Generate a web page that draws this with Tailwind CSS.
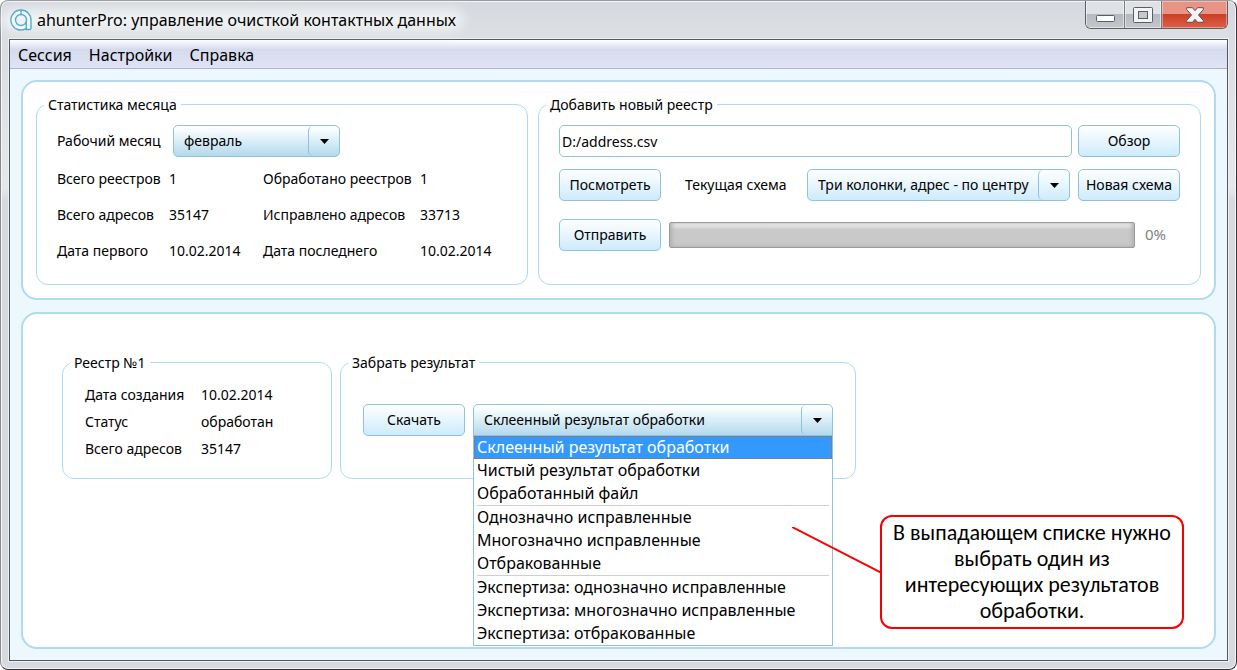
<!DOCTYPE html>
<html lang="ru">
<head>
  <meta charset="UTF-8" />
  <meta name="viewport" content="width=device-width, initial-scale=1.0" />
  <title>ahunterPro: управление очисткой контактных данных</title>
  <script src="https://cdn.jsdelivr.net/npm/@tailwindcss/browser@4"></script>
</head>
<body class="bg-white font-['Noto_Sans',sans-serif] text-black">
  <div class="flex min-h-screen flex-col rounded-lg border border-t-[#9a9a9e] border-r-[#333] border-b-[#333] border-l-[#8a8a8e] bg-linear-to-b from-[#d6dae0] from-0% via-[#e6e9eb] via-28% to-[#d6dae0] to-30% px-2 pb-2 shadow-[inset_0_0_0_1px_#f4f6f8]">

    <!-- Заголовок окна -->
    <header class="flex h-[38px] items-start justify-between bg-linear-to-b from-[#d5d9df] to-[#dcdfe3] shadow-[inset_0_1px_0_#f4f6f8]">
      <div class="relative flex h-[38px] items-center gap-1">
        <div class="absolute -inset-x-2 inset-y-2 rounded-full bg-[#eff1f2] blur-[6px]"></div>
        <svg class="relative h-6 w-6" viewBox="0 0 24 24" fill="none">
          <path d="M12 2a10 10 0 1 0 5 18.600V21.500h3.500q1.500 0 1.500-1.500V12A10 10 0 0 0 12 2z" fill="#f2fafd" stroke="#58a9d0" stroke-width="1.400" />
          <circle cx="12" cy="12" r="5.500" fill="#edf3f6" stroke="#58a9d0" stroke-width="1.400" />
          <path d="M12 2v5M17.300 13v8" stroke="#58a9d0" stroke-width="1.400" />
        </svg>
        <h1 class="relative text-base">ahunterPro: управление очисткой контактных данных</h1>
      </div>
      <div class="flex h-7 overflow-hidden rounded-b-md border border-t-0 border-[#5c6066]">
        <button type="button" aria-label="Свернуть" class="flex w-[39px] items-center justify-center border-r border-[#777b82] bg-linear-to-b from-[#dfe2e5] from-50% via-[#b6bac0] via-50% to-[#c4c7cc] shadow-[inset_0_0_0_1px_#ffffff80]">
          <svg class="mt-2 h-[7px] w-[19px]" viewBox="0 0 19 7"><rect x=".5" y=".5" width="18" height="6" rx="1" fill="#fff" stroke="#5a5d66" /></svg>
        </button>
        <button type="button" aria-label="Развернуть" class="flex w-[37px] items-center justify-center border-r border-[#777b82] bg-linear-to-b from-[#dfe2e5] from-50% via-[#b6bac0] via-50% to-[#c4c7cc] shadow-[inset_0_0_0_1px_#ffffff80]">
          <svg class="h-4 w-5" viewBox="0 0 20 16"><rect x=".5" y=".5" width="19" height="15" rx="1" fill="#f4f4f5" stroke="#5a5d66" /><rect x="5.500" y="4.500" width="9" height="7" fill="#c6c9ce" stroke="#5a5d66" /></svg>
        </button>
        <button type="button" aria-label="Закрыть" class="flex w-[65px] items-center justify-center bg-linear-to-b from-[#e89384] from-48% via-[#cb3f27] via-50% to-[#dc6049] shadow-[inset_0_0_0_1px_#ffffff60]">
          <svg class="h-4 w-[18px]" viewBox="0 0 18 16"><path d="M.7.7h5.800L9 3.700 11.500.7h5.800v1.800L12.500 8l4.800 5.500v1.800h-5.800L9 12.300l-2.500 3H.7v-1.800L5.500 8 .7 2.500z" fill="#f4f4f4" stroke="#5a5058" stroke-linejoin="round" /></svg>
        </button>
      </div>
    </header>

    <div class="flex flex-1 flex-col border border-[#55585e] bg-[#ecf7fe] shadow-[0_0_0_1px_#eef0f2]">
      <nav class="flex h-[29px] items-center gap-[17px] border-b border-[#b0b4d0] bg-linear-to-b from-white from-0% via-[#d5daed] via-34% to-[#dfe3f5] px-2 pt-px text-base">
        <a href="#">Сессия</a>
        <a href="#">Настройки</a>
        <a href="#">Справка</a>
      </nav>

      <main class="flex flex-1 flex-col gap-3 px-[11px] pt-[11px] pb-[11px] text-sm">
        <section class="flex gap-[10px] rounded-2xl border-2 border-[#b0daee] bg-white px-[13px] pt-3 pb-[13px]">
          <fieldset class="w-[492px] rounded-xl border border-[#b0daee] px-5 pb-[15px]">
            <legend class="-ml-[13px] px-1 leading-[21px]">Статистика месяца</legend>
            <div class="mt-[10px] mb-1 flex items-center">
              <label for="month" class="w-[116px]">Рабочий месяц</label>
              <div class="relative w-[167px]">
                <select id="month" class="h-8 w-full appearance-none rounded-[5px] border border-[#8fc3da] bg-linear-to-b from-white from-5% via-[#def0f9] via-45% to-[#b3d9ec] px-[10px]">
                  <option>февраль</option>
                </select>
                <span class="pointer-events-none absolute inset-y-px right-px flex w-[31px] items-center justify-center rounded-l-[5px] border-l border-[#8fc3da]">
                  <svg class="h-[5px] w-[9px]" viewBox="0 0 9 5"><path d="M0 0h9L4.500 5z" /></svg>
                </span>
              </div>
            </div>
            <dl class="grid auto-rows-[36px] grid-cols-[112px_94px_157px_1fr] items-center whitespace-nowrap">
              <dt>Всего реестров</dt><dd>1</dd>
              <dt>Обработано реестров</dt><dd>1</dd>
              <dt>Всего адресов</dt><dd>35147</dd>
              <dt>Исправлено адресов</dt><dd>33713</dd>
              <dt>Дата первого</dt><dd>10.02.2014</dd>
              <dt>Дата последнего</dt><dd>10.02.2014</dd>
            </dl>
          </fieldset>

          <fieldset class="min-w-0 flex-1 rounded-xl border border-[#b0daee] px-5">
            <legend class="-ml-[13px] px-1 leading-[21px]"><label for="path">Добавить новый реестр</label></legend>
            <div class="mt-[10px] flex gap-[6px]">
              <input id="path" type="text" value="D:/address.csv" class="h-8 min-w-0 flex-1 rounded-[5px] border border-[#8fc3da] bg-white px-[2px]" />
              <button type="button" class="h-8 w-[102px] rounded-[5px] border border-[#8fc3da] bg-linear-to-b from-white to-[#cdebfc]">Обзор</button>
            </div>
            <div class="mt-3 flex items-center">
              <button type="button" class="h-8 w-[102px] rounded-[5px] border border-[#8fc3da] bg-linear-to-b from-white to-[#cdebfc]">Посмотреть</button>
              <label for="scheme" class="ml-6 flex-1 whitespace-nowrap">Текущая схема</label>
              <div class="relative mr-2 w-[263px]">
                <select id="scheme" class="h-8 w-full appearance-none rounded-[5px] border border-[#8fc3da] bg-linear-to-b from-white to-[#cdebfc] pl-[10px]">
                  <option>Три колонки, адрес - по центру</option>
                </select>
                <span class="pointer-events-none absolute inset-y-px right-px flex w-[31px] items-center justify-center rounded-l-[5px] border-l border-[#8fc3da]">
                  <svg class="h-[5px] w-[9px]" viewBox="0 0 9 5"><path d="M0 0h9L4.500 5z" /></svg>
                </span>
              </div>
              <button type="button" class="h-8 w-[102px] rounded-[5px] border border-[#8fc3da] bg-linear-to-b from-white to-[#cdebfc] whitespace-nowrap">Новая схема</button>
            </div>
            <div class="mt-[18px] flex items-center">
              <button type="button" class="h-8 w-[102px] rounded-[5px] border border-[#8fc3da] bg-linear-to-b from-white to-[#cdebfc]">Отправить</button>
              <div role="progressbar" aria-valuenow="0" aria-valuemin="0" aria-valuemax="100" aria-label="Отправка" class="ml-2 h-[26px] flex-1 rounded-xs border border-[#9a9a9a] bg-linear-to-b from-[#f0f0f0] from-5% via-[#c9c9c9] via-28% to-[#c9c9c9] shadow-[inset_3px_0_4px_-1px_#b0b0b0,inset_-3px_0_4px_-1px_#b0b0b0]"></div>
              <span class="ml-[10px] w-[35px] text-[15px] text-[#808080]">0%</span>
            </div>
          </fieldset>
        </section>

        <section class="relative flex flex-1 items-start gap-2 rounded-2xl border-2 border-[#b0daee] bg-white px-[39px] pt-[38px]">
          <fieldset class="h-[127px] w-[270px] rounded-xl border border-[#b0daee] px-[22px]">
            <legend class="-ml-[15px] px-1 leading-[21px]">Реестр №1</legend>
            <dl class="mt-2 grid auto-rows-[27px] grid-cols-[116px_1fr] items-center">
              <dt>Дата создания</dt><dd>10.02.2014</dd>
              <dt>Статус</dt><dd>обработан</dd>
              <dt>Всего адресов</dt><dd>35147</dd>
            </dl>
          </fieldset>

          <fieldset class="h-[127px] w-[516px] rounded-xl border border-[#b0daee] px-[22px]">
            <legend class="-ml-[15px] px-1 leading-[21px]"><label for="result">Забрать результат</label></legend>
            <div class="mt-[31px] flex gap-2">
              <button type="button" class="h-8 w-[102px] rounded-[5px] border border-[#8fc3da] bg-linear-to-b from-white to-[#cdebfc]">Скачать</button>
              <div class="relative w-[360px]">
                <select id="result" class="h-8 w-full appearance-none rounded-t-[5px] border border-[#8fc3da] bg-linear-to-b from-white from-5% via-[#def0f9] via-45% to-[#b3d9ec] px-[10px]">
                  <option>Склеенный результат обработки</option>
                </select>
                <span class="pointer-events-none absolute inset-y-px right-px flex w-[31px] items-center justify-center rounded-l-[5px] border-l border-[#8fc3da]">
                  <svg class="h-[5px] w-[9px]" viewBox="0 0 9 5"><path d="M0 0h9L4.500 5z" /></svg>
                </span>
                <ul role="listbox" aria-label="Забрать результат" class="absolute inset-x-0 top-[31px] z-10 border border-[#8fc3da] bg-white text-base leading-[23px] whitespace-nowrap">
                  <li role="option" aria-selected="true" class="border border-dotted border-[#b8691c] bg-[#3399ff] px-[2px] leading-[21px] text-white">Склеенный результат обработки</li>
                  <li role="option" class="px-[3px]">Чистый результат обработки</li>
                  <li role="option" class="px-[3px]">Обработанный файл</li>
                  <li role="separator" class="mx-[3px] h-px bg-[#cfcfcf]"></li>
                  <li role="option" class="px-[3px]">Однозначно исправленные</li>
                  <li role="option" class="px-[3px]">Многозначно исправленные</li>
                  <li role="option" class="px-[3px]">Отбракованные</li>
                  <li role="separator" class="mx-[3px] h-px bg-[#cfcfcf]"></li>
                  <li role="option" class="px-[3px]">Экспертиза: однозначно исправленные</li>
                  <li role="option" class="px-[3px]">Экспертиза: многозначно исправленные</li>
                  <li role="option" class="px-[3px]">Экспертиза: отбракованные</li>
                </ul>
              </div>
            </div>
          </fieldset>

          <!-- Подсказка к списку -->
          <div class="absolute top-[201px] left-[857px] z-20 w-[304px] rounded-xl border-2 border-[#f80000] bg-white py-[3px] text-center font-['Carlito','Lato',sans-serif] text-[22px] leading-[26px]">
            <svg class="absolute top-[10px] -left-[90px] h-[48px] w-[90px]" viewBox="0 0 90 48"><path d="M0 0l90 46" stroke="#f80000" stroke-width="2" /></svg>
            <p>В выпадающем списке нужно<br />выбрать один из<br />интересующих результатов<br />обработки.</p>
          </div>
        </section>
      </main>
    </div>
  </div>
</body>
</html>
